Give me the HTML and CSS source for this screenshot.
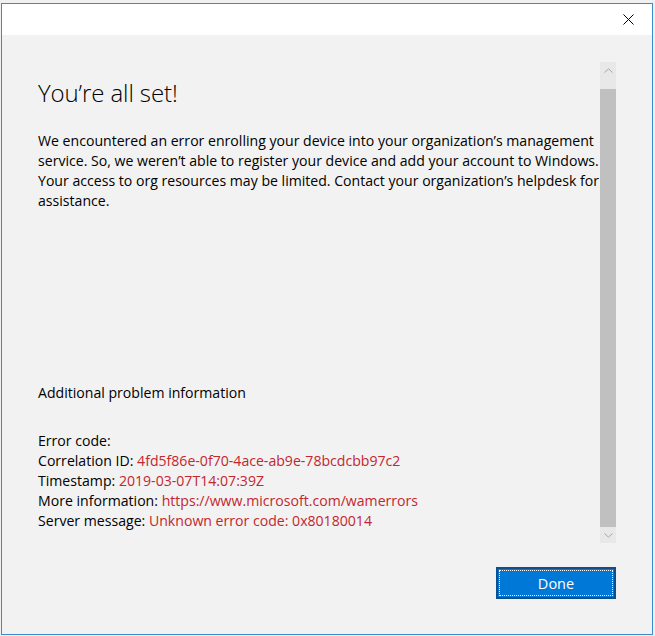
FILE: index.html
```html
<!DOCTYPE html>
<html lang="en">
<head>
<meta charset="utf-8">
<title>You're all set!</title>
<link rel="stylesheet" href="styles.css">
</head>
<body>
<div class="desktop">
  <div class="window">
    <div class="titlebar">
      <button class="close" aria-label="Close">
        <svg width="11" height="11" viewBox="0 0 11 11"><path d="M0.5 0.5L10.5 10.5M10.5 0.5L0.5 10.5" stroke="#000" stroke-width="1" fill="none"/></svg>
      </button>
    </div>
    <div class="content">
      <div class="body-row">
        <div class="main">
          <h1 class="heading">You’re all set!</h1>
          <p class="message">We encountered an error enrolling your device into your organization’s management service. So, we weren’t able to register your device and add your account to Windows. Your access to org resources may be limited. Contact your organization’s helpdesk for assistance.</p>
          <div class="additional">Additional problem information</div>
          <div class="details">
            <div>Error code: </div>
            <div>Correlation ID: <span class="err">4fd5f86e-0f70-4ace-ab9e-78bcdcbb97c2</span></div>
            <div>Timestamp: <span class="err">2019-03-07T14:07:39Z</span></div>
            <div>More information: <span class="err">https://www.microsoft.com/wamerrors</span></div>
            <div>Server message: <span class="err">Unknown error code: 0x80180014</span></div>
          </div>
        </div>
        <div class="scrollbar">
          <div class="arrow">
            <svg width="9" height="5" viewBox="0 0 9 5"><path d="M0.5 4.5L4.5 0.8L8.5 4.5" stroke="#a6a6a6" stroke-width="1" fill="none"/></svg>
          </div>
          <div class="thumb"></div>
          <div class="arrow">
            <svg width="9" height="5" viewBox="0 0 9 5"><path d="M0.5 0.5L4.5 4.2L8.5 0.5" stroke="#a6a6a6" stroke-width="1" fill="none"/></svg>
          </div>
        </div>
      </div>
      <div class="footer">
        <button class="done"><span class="focus">Done</span></button>
      </div>
    </div>
  </div>
</div>
</body>
</html>
```
FILE: styles.css
```css
html, body {
  margin: 0;
  padding: 0;
  background: #eef1f3;
}
.desktop {
  width: 655px;
  height: 636px;
  padding: 3px 2px 1px 1px;
  box-sizing: border-box;
  background: #eef0f2;
}
.window {
  width: 652px;
  height: 632px;
  box-sizing: border-box;
  border: 1px solid #3b8ccf;
  display: flex;
  flex-direction: column;
  font-family: "Open Sans", "Noto Sans", sans-serif;
  color: #000;
}
.titlebar {
  height: 31px;
  background: #fff;
  display: flex;
  justify-content: flex-end;
  align-items: center;
  padding-right: 18px;
}
.close {
  border: 0;
  background: transparent;
  padding: 0;
  width: 11px;
  height: 11px;
  display: flex;
}
.content {
  flex: 1;
  background: #f2f2f2;
  display: flex;
  flex-direction: column;
}
.body-row {
  display: flex;
  padding-right: 36px;
}
.main {
  flex: 1;
  padding: 41px 0 0 36px;
  font-size: 14.1px;
  line-height: 20px;
}
.heading {
  margin: 0;
  font-size: 24px;
  font-weight: 300;
  line-height: 34px;
  letter-spacing: -0.1px;
}
.message {
  margin: 21px 0 0 0;
}
.additional {
  margin-top: 172px;
}
.details {
  margin-top: 28px;
}
.err {
  color: #c4262e;
}
.scrollbar {
  width: 16px;
  margin-top: 27px;
  height: 481px;
  background: #e8e8e8;
  display: flex;
  flex-direction: column;
}
.arrow {
  height: 16px;
  display: flex;
  align-items: center;
  justify-content: center;
}
.thumb {
  flex: 1;
  background: #c0c0c0;
  margin-top: 11px;
}
.footer {
  display: flex;
  justify-content: flex-end;
  padding: 24px 36px 0 0;
}
.done {
  width: 120px;
  height: 32px;
  box-sizing: border-box;
  border: 2px solid #0e4f8c;
  background: #0078d7;
  padding: 1px;
  display: flex;
}
.focus {
  flex: 1;
  border: 1px dotted #fff;
  color: #fff;
  font-family: "Open Sans", "Noto Sans", sans-serif;
  font-size: 14.5px;
  display: flex;
  align-items: center;
  justify-content: center;
}
```
